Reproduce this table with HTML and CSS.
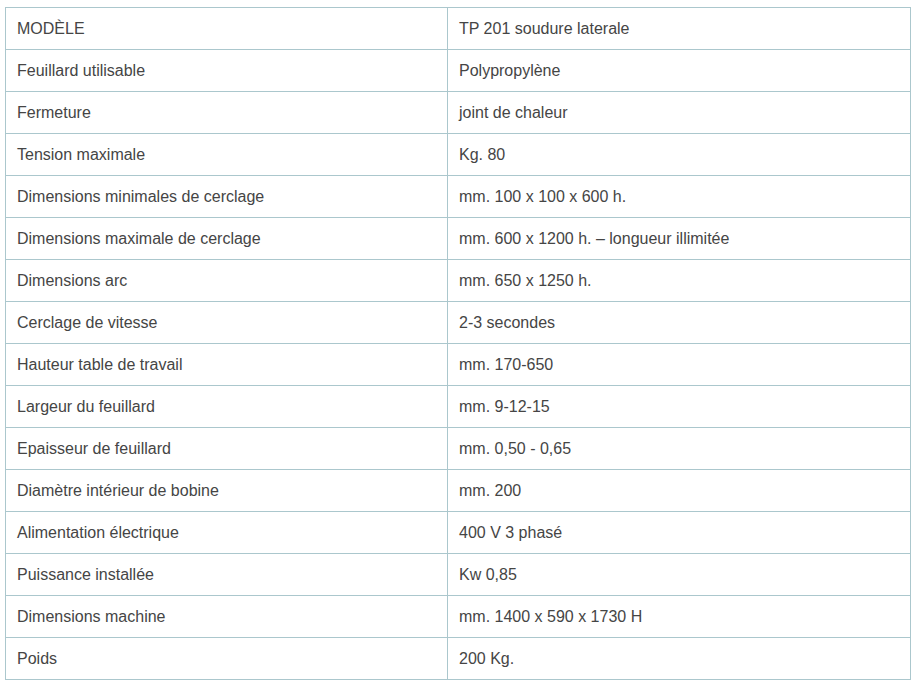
FILE: index.html
```html
<!DOCTYPE html>
<html lang="fr">
<head>
<meta charset="utf-8">
<title>TP 201</title>
<link rel="stylesheet" href="styles.css">
</head>
<body>
<div class="wrap">
<table class="spec">
<colgroup><col class="c1"><col class="c2"></colgroup>
<tbody>
<tr><td>MODÈLE</td><td>TP 201 soudure laterale</td></tr>
<tr><td>Feuillard utilisable</td><td>Polypropylène</td></tr>
<tr><td>Fermeture</td><td>joint de chaleur</td></tr>
<tr><td>Tension maximale</td><td>Kg. 80</td></tr>
<tr><td>Dimensions minimales de cerclage</td><td>mm. 100 x 100 x 600 h.</td></tr>
<tr><td>Dimensions maximale de cerclage</td><td>mm. 600 x 1200 h. – longueur illimitée</td></tr>
<tr><td>Dimensions arc</td><td>mm. 650 x 1250 h.</td></tr>
<tr><td>Cerclage de vitesse</td><td>2-3 secondes</td></tr>
<tr><td>Hauteur table de travail</td><td>mm. 170-650</td></tr>
<tr><td>Largeur du feuillard</td><td>mm. 9-12-15</td></tr>
<tr><td>Epaisseur de feuillard</td><td>mm. 0,50 - 0,65</td></tr>
<tr><td>Diamètre intérieur de bobine</td><td>mm. 200</td></tr>
<tr><td>Alimentation électrique</td><td>400 V 3 phasé</td></tr>
<tr><td>Puissance installée</td><td>Kw 0,85</td></tr>
<tr><td>Dimensions machine</td><td>mm. 1400 x 590 x 1730 H</td></tr>
<tr><td>Poids</td><td>200 Kg.</td></tr>
</tbody>
</table>
</div>
</body>
</html>
```
FILE: styles.css
```css
html, body {
  margin: 0;
  padding: 0;
  background: #ffffff;
}
.wrap {
  padding: 7px 0 0 5px;
}
.spec {
  border-collapse: collapse;
  table-layout: fixed;
  width: 905px;
  font-family: "Liberation Sans", Arial, sans-serif;
  font-size: 16px;
  color: #454545;
}
.c1 { width: 442px; }
.c2 { width: 463px; }
.spec td {
  border: 1px solid #abc7cd;
  height: 41px;
  padding: 0 11px;
  box-sizing: border-box;
  vertical-align: middle;
  line-height: 20px;
  white-space: nowrap;
}
.spec tr { height: 42px; }
```
